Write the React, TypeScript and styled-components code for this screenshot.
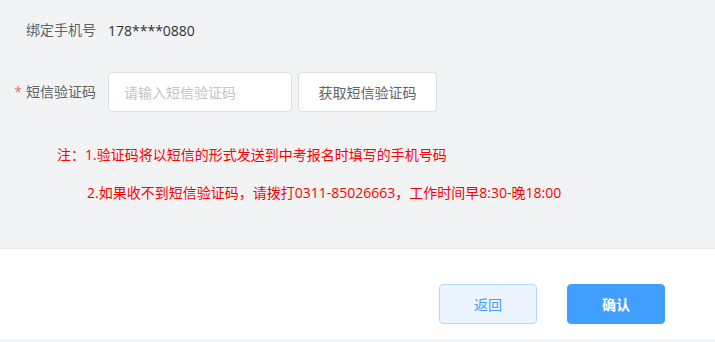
import React, { useState } from 'react'
import styled, { createGlobalStyle } from 'styled-components'

const GlobalStyle = createGlobalStyle`
  html, body {
    margin: 0;
    padding: 0;
    background: #f2f3f5;
  }
  body {
    font-family: "Open Sans", "Noto Sans CJK SC", sans-serif;
    font-size: 14px;
  }
`

/*
 * STYLES
 */

const Page = styled.div`
  width: 715px;
  height: 342px;
  background: #f2f3f5;
`

const FormArea = styled.div`
  box-sizing: border-box;
  height: 248px;
  padding-top: 10px;
`

const Row = styled.div<{ $gap?: number }>`
  display: flex;
  align-items: center;
  height: 40px;
  margin-bottom: ${(p) => p.$gap ?? 0}px;
`

const Label = styled.label`
  width: 96px;
  margin-right: 12px;
  text-align: right;
  color: #606266;
  line-height: 40px;
  white-space: nowrap;
`

const Required = styled.span`
  color: #f56c6c;
  margin-right: 4px;
`

const Value = styled.span`
  color: #303133;
  font-size: 14px;
`

const Input = styled.input`
  box-sizing: border-box;
  width: 184px;
  height: 40px;
  padding: 0 15px;
  border: 1px solid #dcdfe6;
  border-radius: 4px;
  background: #fff;
  font-family: inherit;
  font-size: 14px;
  color: #606266;
  outline: none;

  &::placeholder {
    color: #c0c4cc;
  }
`

const CodeButton = styled.button`
  box-sizing: border-box;
  width: 139px;
  height: 40px;
  margin-left: 6px;
  border: 1px solid #dcdfe6;
  border-radius: 4px;
  background: #fff;
  color: #606266;
  font-family: inherit;
  font-size: 14px;
  cursor: pointer;
`

const Notes = styled.div`
  margin-top: 33px;
  color: #ff0000;
  font-size: 14px;
`

const NoteLine = styled.p<{ $indent: number }>`
  margin: 0 0 18px;
  padding-left: ${(p) => p.$indent}px;
  line-height: 20px;
  white-space: nowrap;
`

const Footer = styled.div`
  box-sizing: border-box;
  height: 91px;
  padding: 35px 50px 0 0;
  border-top: 1px solid #e6e8eb;
  background: #fff;
  display: flex;
  justify-content: flex-end;
  gap: 30px;
`

const ActionButton = styled.button<{ $primary?: boolean }>`
  box-sizing: border-box;
  width: 98px;
  height: 40px;
  border-radius: 4px;
  border: 1px solid ${(p) => (p.$primary ? '#409eff' : '#b3d8ff')};
  background: ${(p) => (p.$primary ? '#409eff' : '#ecf5ff')};
  color: ${(p) => (p.$primary ? '#fff' : '#409eff')};
  font-family: inherit;
  font-size: 14px;
  font-weight: ${(p) => (p.$primary ? 600 : 400)};
  cursor: pointer;
`

/*
 * COMPONENT
 */

const App = () => {
  const [code, setCode] = useState('')

  return (
    <Page>
      <GlobalStyle />
      <FormArea>
        <Row $gap={22}>
          <Label>绑定手机号</Label>
          <Value>178****0880</Value>
        </Row>
        <Row>
          <Label>
            <Required>*</Required>短信验证码
          </Label>
          <Input
            value={code}
            placeholder="请输入短信验证码"
            onChange={(e) => setCode(e.target.value)}
          />
          <CodeButton>获取短信验证码</CodeButton>
        </Row>
        <Notes>
          <NoteLine $indent={57}>注：1.验证码将以短信的形式发送到中考报名时填写的手机号码</NoteLine>
          <NoteLine $indent={87}>
            2.如果收不到短信验证码，请拨打0311-85026663，工作时间早8:30-晚18:00
          </NoteLine>
        </Notes>
      </FormArea>
      <Footer>
        <ActionButton>返回</ActionButton>
        <ActionButton $primary>确认</ActionButton>
      </Footer>
    </Page>
  )
}

export default App
